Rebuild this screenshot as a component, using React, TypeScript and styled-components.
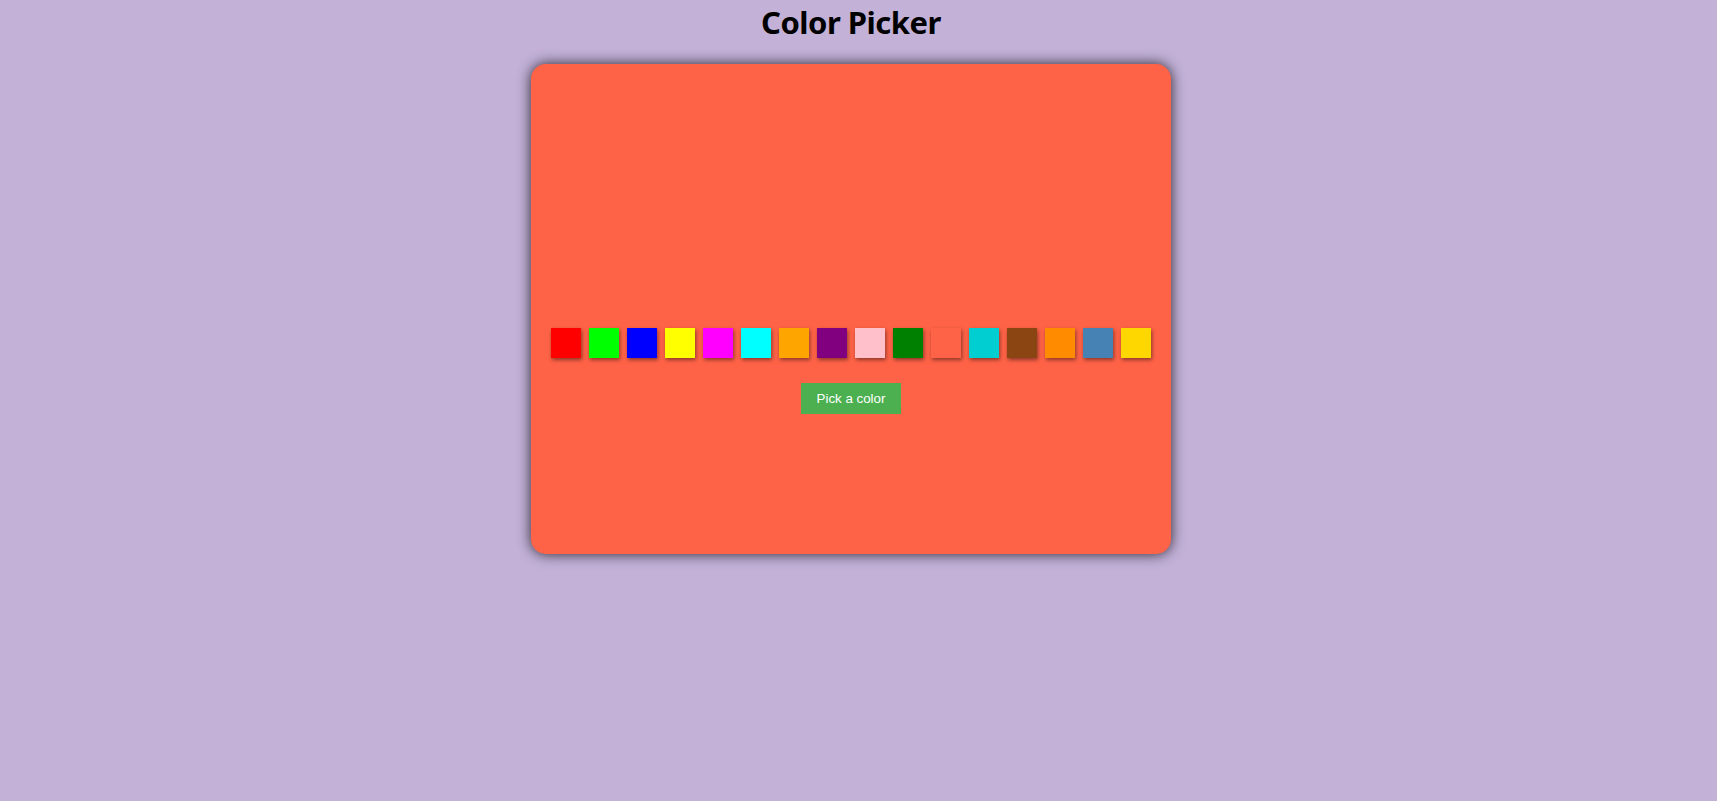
import styled, { createGlobalStyle } from 'styled-components'
import { useState } from 'react'

const COLORS = [
	'#ff0000',
	'#00ff00',
	'#0000ff',
	'#ffff00',
	'#ff00ff',
	'#00ffff',
	'#ffa500',
	'#800080',
	'#ffc0cb',
	'#008000',
	'#ff6347',
	'#00ced1',
	'#8b4513',
	'#ff8c00',
	'#4682b4',
	'#ffd700',
]

export default function App() {
	const [color, setColor] = useState('#ff6347')

	return (
		<>
			<GlobalStyle />
			<Page>
				<Title>Color Picker</Title>
				<Card $color={color}>
					<Preview />
					<Palette>
						{COLORS.map((c) => (
							<Swatch key={c} $color={c} onClick={() => setColor(c)} aria-label={c} />
						))}
					</Palette>
					<PickButton onClick={() => setColor(COLORS[Math.floor(Math.random() * COLORS.length)])}>
						Pick a color
					</PickButton>
				</Card>
			</Page>
		</>
	)
}

const GlobalStyle = createGlobalStyle`
	body {
		margin: 0;
		background-color: #c3b1d8;
		font-family: 'Noto Sans', 'Open Sans', sans-serif;
	}
`

// leaves room where the scrollbar sat in the original layout
const Page = styled.div`
	min-height: 100vh;
	padding-right: 15px;
	display: flex;
	flex-direction: column;
	align-items: center;
`

const Title = styled.h1`
	margin: 0;
	padding-top: 3px;
	font-size: 31px;
	letter-spacing: -0.5px;
	line-height: 38px;
	font-weight: 700;
	color: #000;
`

const Card = styled.div<{ $color: string }>`
	margin-top: 23px;
	width: 640px;
	height: 490px;
	box-sizing: border-box;
	padding: 16px;
	border-radius: 15px;
	background-color: ${(p) => p.$color};
	box-shadow: 0 0 14px rgba(0, 0, 0, 0.8);
	display: flex;
	flex-direction: column;
	align-items: center;
`

const Preview = styled.div`
	height: 244px;
	width: 100%;
`

const Palette = styled.div`
	display: flex;
	flex-wrap: wrap;
	justify-content: center;
`

const Swatch = styled.button<{ $color: string }>`
	width: 30px;
	height: 30px;
	margin: 4px;
	padding: 0;
	border: none;
	background-color: ${(p) => p.$color};
	box-shadow: 1px 2px 4px rgba(0, 0, 0, 0.45);
	cursor: pointer;
`

const PickButton = styled.button`
	margin-top: 21px;
	padding: 8px 16px;
	border: none;
	background-color: #4caf50;
	color: #fff;
	font-family: 'Liberation Sans', Arial, sans-serif;
	font-size: 13.33px;
	cursor: pointer;
`
